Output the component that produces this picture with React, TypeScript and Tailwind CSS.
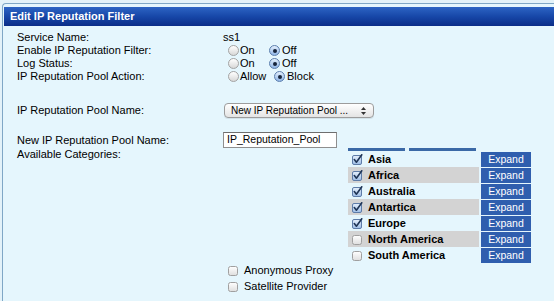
import React from "react";

const Radio = ({ checked }: { checked?: boolean }) =>
  checked ? (
    <span className="inline-flex w-[11px] h-[11px] shrink-0 items-center justify-center rounded-full border border-[#5b7ead] bg-linear-to-b from-[#e3effc] to-[#8fb5e6]">
      <span className="w-[4px] h-[4px] rounded-full bg-[#16243a]" />
    </span>
  ) : (
    <span className="inline-block w-[11px] h-[11px] shrink-0 rounded-full border border-[#a3a3a3] bg-linear-to-b from-white to-[#d8d8d8]" />
  );

const Check = ({ checked }: { checked?: boolean }) =>
  checked ? (
    <svg width="11" height="11" viewBox="0 0 11 11" className="shrink-0">
      <defs>
        <linearGradient id="cg" x1="0" y1="0" x2="0" y2="1">
          <stop offset="0" stopColor="#e6f0fc" />
          <stop offset="1" stopColor="#9dbde6" />
        </linearGradient>
      </defs>
      <rect x="0.5" y="1.5" width="9" height="9" rx="1.5" fill="url(#cg)" stroke="#5e7ca8" />
      <path d="M2.3 5.6 L4.4 8.2 L9.8 0.8" fill="none" stroke="#1f3556" strokeWidth="1.6" strokeLinecap="round" strokeLinejoin="round" />
    </svg>
  ) : (
    <svg width="11" height="11" viewBox="0 0 11 11" className="shrink-0">
      <defs>
        <linearGradient id="ug" x1="0" y1="0" x2="0" y2="1">
          <stop offset="0" stopColor="#ffffff" />
          <stop offset="1" stopColor="#dedede" />
        </linearGradient>
      </defs>
      <rect x="0.5" y="1.5" width="9" height="9" rx="2" fill="url(#ug)" stroke="#a0a0a0" />
    </svg>
  );

const cats = [
  { name: "Asia", checked: true },
  { name: "Africa", checked: true },
  { name: "Australia", checked: true },
  { name: "Antartica", checked: true },
  { name: "Europe", checked: true },
  { name: "North America", checked: false },
  { name: "South America", checked: false },
];

export default function App() {
  return (
    <div
      className="w-[554px] h-[301px] overflow-hidden bg-[#e3f2f9] pt-[3px] text-[11px] text-black"
      style={{ fontFamily: '"Liberation Sans", Arial, sans-serif' }}
    >
      <div className="ml-[2px] h-[298px] rounded-tl-[4px] border-l border-t border-[#7fa7c6] bg-[#e5f6fd]">
        <div className="mt-[3px] ml-[1px] h-[19px] flex items-center pl-[6px] bg-linear-to-b from-[#2d64c4] via-[#1747a8] to-[#0b2d88] text-white font-bold text-[11px]">
          Edit IP Reputation Filter
        </div>

        <div className="mt-[5px] flex flex-col">
          <div className="flex h-[13px] items-center">
            <div className="w-[220px] pl-[14px]">Service Name:</div>
            <div>ss1</div>
          </div>
          <div className="flex h-[13px] items-center">
            <div className="w-[220px] pl-[14px]">Enable IP Reputation Filter:</div>
            <div className="flex items-center ml-[5px]">
              <span className="flex w-[41px] items-center gap-[1px]"><Radio />On</span>
              <span className="flex items-center gap-[2px]"><Radio checked />Off</span>
            </div>
          </div>
          <div className="flex h-[13px] items-center">
            <div className="w-[220px] pl-[14px]">Log Status:</div>
            <div className="flex items-center ml-[5px]">
              <span className="flex w-[41px] items-center gap-[1px]"><Radio />On</span>
              <span className="flex items-center gap-[2px]"><Radio checked />Off</span>
            </div>
          </div>
          <div className="flex h-[13px] items-center">
            <div className="w-[220px] pl-[14px]">IP Reputation Pool Action:</div>
            <div className="flex items-center ml-[5px]">
              <span className="flex w-[46px] items-center gap-[1px]"><Radio />Allow</span>
              <span className="flex items-center gap-[2px]"><Radio checked />Block</span>
            </div>
          </div>

          <div className="mt-[20px] flex h-[15px] items-center">
            <div className="w-[220px] pl-[14px]">IP Reputation Pool Name:</div>
            <div className="ml-[1px] flex h-[15px] w-[150px] items-center justify-between rounded-[4px] border border-[#9c9c9c] bg-linear-to-b from-white to-[#e4e4e4] pl-[6px] pr-[7px] text-[10px] shadow-[0_1px_0_rgba(0,0,0,0.08)]">
              <span>New IP Reputation Pool ...</span>
              <svg width="5" height="8" viewBox="0 0 5 8">
                <path d="M0 3 L2.5 0 L5 3 Z" fill="#333" />
                <path d="M0 5 L2.5 8 L5 5 Z" fill="#333" />
              </svg>
            </div>
          </div>

          <div className="mt-[14px] flex h-[16px] items-center">
            <div className="w-[220px] pl-[14px]">New IP Reputation Pool Name:</div>
            <div className="flex h-[16px] w-[114px] items-center border border-[#8e8e8e] border-t-[#6e6e6e] bg-white pl-[3px] text-[10.5px]">
              IP_Reputation_Pool
            </div>
          </div>

          <div className="flex">
            <div className="w-[220px] pl-[14px] leading-[13px]">Available Categories:</div>
            <div className="flex flex-col">
              <div className="ml-[125px] flex flex-col">
                <div className="flex h-[3px] gap-[4px]">
                  <div className="w-[57px] bg-[#3b69a6]" />
                  <div className="w-[67px] bg-[#3b69a6]" />
                </div>
                {cats.map((c, i) => (
                  <div key={c.name} className="flex h-[16px]">
                    <div
                      className={
                        "flex w-[131px] items-center pl-[4px] font-bold " +
                        (i % 2 === 1 ? "bg-[#d3d3d3]" : "")
                      }
                    >
                      <Check checked={c.checked} />
                      <span className="ml-[5px]">{c.name}</span>
                    </div>
                    <div className="ml-[2px] flex h-[15px] w-[50px] self-end items-center justify-center bg-[#2f5eae] text-[10.5px] text-white">
                      Expand
                    </div>
                  </div>
                ))}
              </div>
              <div className="ml-[5px] flex h-[15px] items-center">
                <Check />
                <span className="ml-[5px]">Anonymous Proxy</span>
              </div>
              <div className="ml-[5px] mt-[1px] flex h-[15px] items-center">
                <Check />
                <span className="ml-[5px]">Satellite Provider</span>
              </div>
            </div>
          </div>
        </div>
      </div>
    </div>
  );
}
